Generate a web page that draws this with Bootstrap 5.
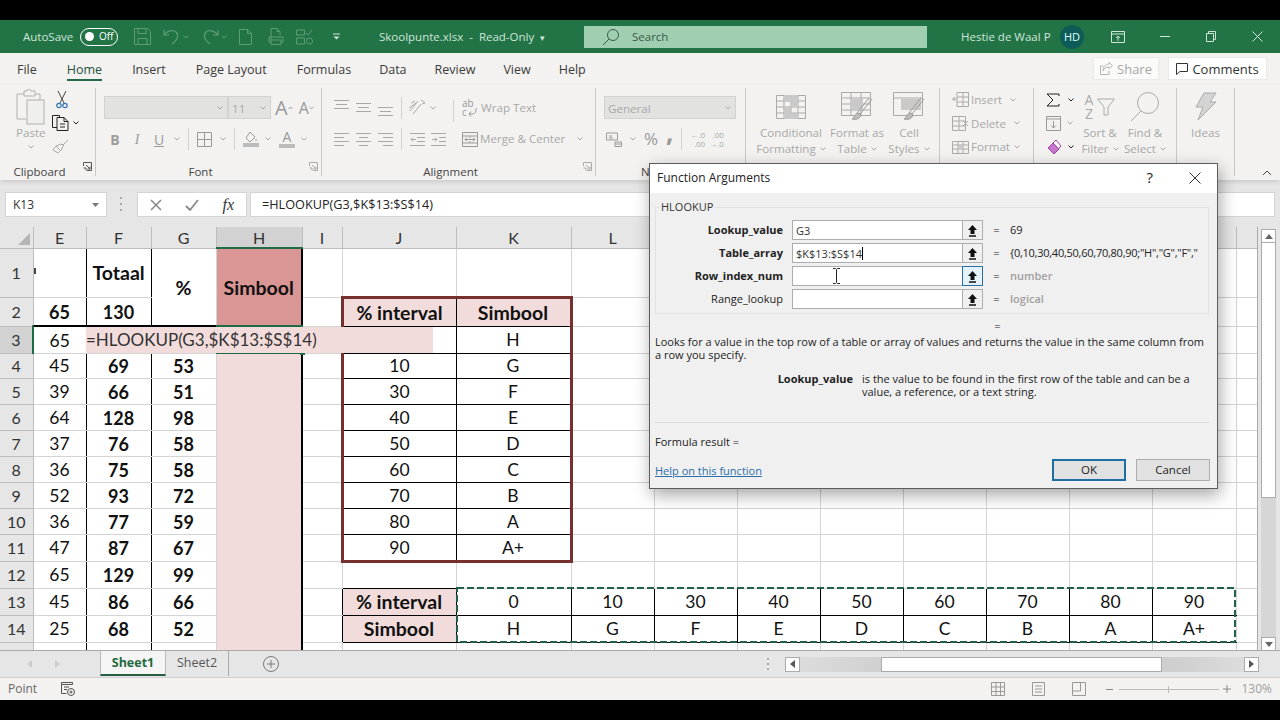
<!DOCTYPE html>
<html lang="en">
<head>
<meta charset="UTF-8">
<title>Skoolpunte.xlsx - Read-Only</title>
<link rel="stylesheet" href="https://cdn.jsdelivr.net/npm/bootstrap@5.3.0/dist/css/bootstrap.min.css">
<style>
html, body { margin: 0; width: 1280px; height: 720px; overflow: hidden; background: #000; }
body { font-family: "Open Sans", "Noto Sans", sans-serif; font-size: 12px; color: #444; }
.screen { position: relative; width: 1280px; height: 720px; padding: 20px 0; background: #000; }
.app { height: 680px; background: #e6e6e6; }
svg { display: block; flex: none; fill: none; }
.ms-2p { margin-left: 2px; } .ms-6p { margin-left: 6px; } .ms-7p { margin-left: 7px; } .ms-10p { margin-left: 10px; } .ms-12p { margin-left: 12px; }
.ms-20p { margin-left: 20px; } .ms-23p { margin-left: 23px; } .ms-27p { margin-left: 27px; } .ms-34p { margin-left: 34px; } .ms-35p { margin-left: 35px; } .ms-36p { margin-left: 36px; }

/* title bar */
.titlebar { height: 33px; background: #227447; color: #cfe5d8; padding-left: 23px; font-size: 11.5px; }
.titlebar > * { flex: none; }
.titlebar .t-auto { width: 57px; }
.toggle { width: 38px; height: 18px; border: 1.5px solid #fff; border-radius: 9px; color: #fff; font-size: 10px; line-height: 15px; padding-left: 18px; position: relative; }
.toggle::before { content: ""; position: absolute; left: 4px; top: 3px; width: 9px; height: 9px; border-radius: 50%; background: #fff; }
.t-title { width: 205px; margin-left: 39px; white-space: nowrap; }
.t-title small { font-size: 9px; }
.searchbox { width: 343px; height: 22px; background: #9fcfb0; color: #3d5a4a; margin-right: 34px; padding-left: 18px; }
.t-user { width: 99px; white-space: nowrap; }
.avatar { width: 24px; height: 24px; border-radius: 50%; background: #0e5c57; color: #dff; font-size: 11px; line-height: 24px; text-align: center; }

/* tabs */
.tabs { height: 32px; background: #f3f2f0; padding-left: 17px; font-size: 12.5px; color: #3b3b3b; }
.tabs .tab { margin-right: 30px; padding-top: 5px; line-height: 24px; height: 28px; white-space: nowrap; }
.tabs .tab.tight { margin-right: 28px; }
.tabs .tab.active { border-bottom: 2px solid #24694a; color: #24533c; }
.btn-share { width: 66px; height: 23px; background: #fbfbfa; border: 1px solid #e9e9e7; border-radius: 0; font-size: 13px; line-height: 20px; padding: 0; color: #a6a6a6; justify-content: center; }
.btn-comments { width: 99px; color: #333; background: #fff; margin: 0 13px 0 9px; }

/* ribbon */
.ribbon { height: 95px; background: #f3f2f0; padding-top: 3px; color: #a8a8a8; box-shadow: 0 2px 4px rgba(0,0,0,.12); position: relative; font-size: 11.6px; }
.rg { position: relative; height: 88px; border-right: 1px solid #c9c9c7; flex: none; }
.rg-body { height: 76px; }
.rg-label { height: 16px; line-height: 16px; margin-bottom: -4px; color: #444; text-align: center; white-space: nowrap; font-size: 11.5px; }
.rg-label.cut { width: 53px; padding-left: 45px; overflow: hidden; text-align: left; }
.launcher { position: absolute; right: 3px; bottom: 5px; }
.g-clip { width: 96px; } .g-font { width: 226px; } .g-align { width: 274px; } .g-num { width: 150px; }
.g-styles { width: 194px; } .g-cells { width: 94px; } .g-edit { width: 143px; } .g-ideas { width: 58px; }
.big { display: flex; flex-direction: column; align-items: center; line-height: 16px; white-space: nowrap; flex: none; }
.big-ico { height: 37px; display: flex; align-items: center; }
.stack { flex: none; }
.stack > div { height: 23.5px; display: flex; align-items: center; white-space: nowrap; }
.two { padding-top: 8px; }
.row-a { height: 23px; display: flex; align-items: center; white-space: nowrap; }
.row-b { height: 26px; margin-top: 7px; display: flex; align-items: center; white-space: nowrap; }
.combo { height: 23px; background: #e2e2e0; border: 1px solid #d2d2d0; display: flex; align-items: center; justify-content: flex-end; padding-right: 4px; position: relative; flex: none; }
.combo span { position: absolute; left: 3px; top: 3px; }
.c-name { width: 124px; } .c-size { width: 43px; } .c-gen { width: 132px; }
.vsep { width: 1px; height: 22px; background: #d0d0ce; flex: none; }
.hsep-b { font-family: "Liberation Serif", serif; }
.fbtn { width: 22px; text-align: center; font-size: 14px; color: #9c9c9c; }
.glyph-a { font-size: 20px; line-height: 20px; color: #999; }
.glyph-a2 { font-size: 16px; line-height: 20px; color: #999; }
.al-col { width: 123px; flex: none; }
.wrap-ico { position: relative; width: 15px; height: 18px; font-size: 10px; line-height: 9px; color: #999; flex: none; }
.wrap-ico svg { position: absolute; right: 0; bottom: 0; }
.color-ico { width: 16px; display: flex; flex-direction: column; align-items: center; font-size: 14px; line-height: 13px; color: #999; }
.color-ico i { display: block; width: 16px; height: 4px; margin-top: 1px; background: #bcbcbc; }
.pct { font-size: 17px; line-height: 20px; color: #999; }
.comma { font-size: 26px; line-height: 20px; font-weight: 700; color: #999; transform: translateY(-7px); }
.dec { font-size: 8px; line-height: 9px; color: #a8a8a8; text-align: right; flex: none; }
.az { display: flex; flex-direction: column; align-items: center; font-size: 14px; line-height: 14px; color: #aaa; }
.col-a { width: 70px; } .col-b { width: 62px; } .col-c { width: 42px; }
.col-sort { width: 44px; } .col-find { width: 46px; } .st-edit { width: 32px; }

/* formula bar */
.fbar { height: 47px; padding: 12px 5px 0 5px; background: #e6e6e6; }
.fbox { height: 25px; background: #fff; border: 1px solid #d4d4d4; color: #333; }
.f-name { width: 102px; padding: 0 7px; }
.f-fx { width: 110px; margin-left: 30px; padding: 0 12px; position: relative; }
.f-input { width: 1025px; margin-left: 3px; padding: 0 11px; }
.f-input span { font-size: 12.7px; color: #222; }
.f-dots { position: absolute; left: 120px; top: 197px; }

/* sheet */
.sheet-row { height: 423px; }
.sheet-wrap { position: relative; width: 1258px; height: 423px; overflow: hidden; background: #fff; border-right: 1px solid #aaa; flex: none; }
table.sheet { table-layout: fixed; width: 1258px; font-family: Lato, "Liberation Sans", sans-serif; font-size: 17.5px; color: #111; }
table.sheet th, table.sheet td { padding: 1px 0 0; text-align: center; vertical-align: middle; border-style: solid; border-width: 0 1px 1px 0; border-color: #d4d4d4; line-height: 1; overflow: hidden; white-space: nowrap; font-weight: 400; }
table.sheet thead th { background: #e6e6e6; border-color: #bdbdbd; color: #333; font-family: Lato, sans-serif; font-size: 16px; height: 21px; }
table.sheet tbody th { background: #e6e6e6; border-color: #bdbdbd; color: #333; font-size: 16px; }
table.sheet thead th.on { background: #d2d2d2; border-bottom: 2px solid #1f6b45; }
table.sheet tbody th.on { background: #d2d2d2; border-right: 2px solid #1f6b45; }
.corner { position: relative; }
.corner::after { content: ""; position: absolute; right: 3px; bottom: 3px; border-style: solid; border-width: 0 0 12px 12px; border-color: transparent transparent #b5b5b5 transparent; }
.r1 { height: 49px; } .r2 { height: 29px; } .r3, .r11, .r12, .r13, .r14 { height: 27px; } .r4 { height: 25px; } .r5, .r6, .r7, .r8, .r9, .r10 { height: 26px; } .r15 { height: 8px; }
table.sheet td.bk { border-right-color: #000; }
table.sheet td.bb { border-bottom-color: #000; }
table.sheet td.bt { border-top: 2px solid #000; }
table.sheet td.fw { font-weight: 700; font-size: 18px; }
table.sheet td.big-t { font-size: 19.5px; }
table.sheet td.dark { background: #da9694; border-right: 2px solid #000; border-bottom-color: #da9694; font-weight: 700; font-size: 19.5px; }
table.sheet td.pink { background: #f2dcdb; border-right: 2px solid #000; border-bottom-color: #f2dcdb; }
table.sheet td.head { background: #f2dcdb; font-weight: 700; font-size: 19.5px; }
table.sheet td.ol { border-left: 3px solid #76302e; }
table.sheet td.or { border-right: 3px solid #76302e; }
table.sheet td.ot { border-top: 3px solid #76302e; }
table.sheet td.ob { border-bottom: 3px solid #76302e; }
.clip-e { display: block; width: 2px; height: 6px; margin-top: -4px; background: #444; }
.edit { position: absolute; left: 86px; top: 100px; width: 347px; height: 26px; background: #f2dcdb; font-family: Lato, sans-serif; font-size: 17px; line-height: 26px; color: #333; white-space: nowrap; }
.sel { position: absolute; left: 216px; top: 98px; width: 87px; height: 29px; border-top: 2px solid #1f6b45; border-bottom: 2px solid #1f6b45; }
.sel::after { content: ""; position: absolute; right: -2px; bottom: -3px; width: 5px; height: 5px; background: #1f6b45; }
.sel-l { position: absolute; left: 32px; top: 99px; width: 2px; height: 27px; background: #1f6b45; }
.ants { position: absolute; left: 456px; top: 360px; }

/* scrollbars */
.vscroll { width: 21px; padding: 2px 3px 0 3px; }
.sb-btn { background: #fff; border: 1px solid #ababab; }
.vscroll .sb-btn { height: 14px; }
.v-thumb { height: 255px; background: #fff; border: 1px solid #ababab; border-top: 0; }
.v-track { height: 139px; background: #d6d6d6; }

/* sheet tabs */
.sheetbar { height: 28px; background: #e6e6e6; border-top: 1px solid #aaa; border-bottom: 1px solid #d0d0d0; padding-left: 27px; }
.s-tab { height: 25px; line-height: 24px; font-size: 12.5px; text-align: center; align-self: flex-start; }
.s-tab.active { width: 66px; margin-left: 40px; background: #f5f5f5; color: #24693f; font-weight: 700; border-left: 1px solid #bbb; border-right: 1px solid #bbb; border-bottom: 2px solid #24603f; }
.s-tab.other { width: 63px; color: #555; border-right: 1px solid #aaa; }
.h-track { width: 444px; height: 15px; background: linear-gradient(90deg, #dcdcdc, #cfcfcf 20%, #cfcfcf 85%, #dcdcdc); position: relative; }
.h-thumb { position: absolute; left: 81px; top: 0; width: 281px; height: 15px; background: #fff; border: 1px solid #ababab; }
.h-btn { width: 15px; height: 15px; background: #fff; border: 1px solid #ababab; display: flex; align-items: center; justify-content: center; }
.h-end { margin-right: 21px; }

/* status bar */
.statusbar { height: 22px; background: #f3f2f0; padding-left: 8px; color: #666; font-size: 12px; }
.zoomline { width: 100px; height: 1px; background: #bbb; position: relative; }
.zoomline::after { content: ""; position: absolute; left: 49px; top: -3px; width: 1px; height: 7px; background: #bbb; }

/* dialog */
.dlg { position: absolute; left: 649px; top: 163px; width: 569px; height: 326px; background: #f0f0f0; border: 1px solid #5c5c5c; box-shadow: 2px 6px 16px rgba(0,0,0,.35); color: #222; font-size: 11px; }
.dlg-head { height: 29px; background: #fff; padding: 0 0 2px 7px; font-size: 12px; }
.dlg fieldset { margin: 7px 8px 0 5px; height: 114px; border: 1px solid #e2e2e2; padding: 0; }
.dlg legend { float: none; width: auto; margin: 0 0 0 4px; padding: 0 1px; font-size: 11px; line-height: 14px; color: #333; }
.fa-row { height: 20px; margin-bottom: 3px; display: flex; align-items: center; }
.fa-rows { padding-top: 6px; }
.fa-label { width: 127px; text-align: right; white-space: nowrap; }
.fa-input { width: 191px; margin-left: 9px; flex-wrap: nowrap; }
.fa-input .form-control { height: 20px; min-height: 0; padding: 0 3px; font-size: 11px; line-height: 19px; border: 1px solid #adadad; border-radius: 0; background: #fff; color: #333; box-shadow: none; }
.fa-input .btn { width: 21px; height: 20px; padding: 0; border: 1px solid #adadad; border-radius: 0; background: #f0f0f0; display: flex; align-items: center; justify-content: center; }
.fa-input .btn.focus { border-color: #2a6ea8; background: #e5f1fb; }
.caret-bar { display: inline-block; width: 1px; height: 13px; background: #000; vertical-align: -2px; }
.fa-eq { width: 27px; text-align: center; }
.fa-val { white-space: nowrap; }
.fa-val.arr { letter-spacing: -.25px; }
.muted { color: #a0a0a0; }
.eq-only { height: 14px; line-height: 14px; margin: 5px 0 0 334px; width: 27px; text-align: center; }
.dlg p { margin: 0; line-height: 13px; white-space: nowrap; }
.dlg p.desc { margin: 2px 0 0 5px; }
.arg { margin: 11px 0 0 5px; }
.dlg p.arg-l { width: 198px; text-align: right; font-weight: 700; }
.dlg p.arg-r { margin-left: 9px; }
.dlg hr { margin: 24px 8px 0 5px; border: 0; border-top: 1px solid #dcdcdc; opacity: 1; }
.f-res { margin: 12px 0 0 5px; line-height: 13px; }
.dlg-foot { margin: 11px 7px 0 5px; }
.dlg-foot a { color: #2a6ea8; margin-bottom: 2px; }
.dlg-foot .btn { width: 74px; height: 22px; padding: 0; font-size: 11.5px; line-height: 18px; border-radius: 0; background: #e1e1e1; border: 1px solid #adadad; color: #222; }
.dlg-foot .btn-ok { border: 2px solid #1c6ea4; margin-right: 10px; }
.ibeam { position: absolute; left: 182px; top: 104px; }
.dlg-help { font-size: 15px; margin-right: 36px; }
</style>
</head>
<body>

<svg width="0" height="0" class="position-absolute">
  <symbol id="chev" viewBox="0 0 6 4"><path d="M.5.5 3 3 5.500.5" stroke="currentColor" stroke-width="1"/></symbol>
  <symbol id="launch" viewBox="0 0 9 9"><path d="M.5 4V.5h8v8H4M3 3l4 4M7 4.500V7H4.500M.5 6h2.500v2.500" stroke="currentColor"/></symbol>
  <symbol id="up" viewBox="0 0 11 13"><path d="M5.500 1 10 6H7.500v4h-4V6H1z" fill="#111"/><path d="M2 12h7" stroke="#111" stroke-width="1.500"/></symbol>
</svg>

<div class="screen">
<div class="app d-flex flex-column">

  <!-- title bar -->
  <div class="titlebar d-flex align-items-center">
    <span class="t-auto">AutoSave</span>
    <span class="toggle">Off</span>
    <svg class="ms-3" width="17" height="17" viewBox="0 0 17 17" stroke="#5d9c7a"><path d="M.5.5h13l3 3v13H.5zM4 .5v5h8v-5M4 16.500v-6h9v6"/></svg>
    <svg class="ms-12p" width="18" height="17" viewBox="0 0 18 17" stroke="#5d9c7a"><path d="M1 2v5h5M1 7c3-4 9-6 12-3s2 8-4 12" stroke-width="1.200"/></svg>
    <svg class="ms-2p" width="6" height="4" color="#5d9c7a"><use href="#chev"/></svg>
    <svg class="ms-12p" width="18" height="17" viewBox="0 0 18 17" stroke="#5d9c7a"><path d="M17 2v5h-5M17 7C14 3 8 1 5 4s-2 8 4 12" stroke-width="1.200"/></svg>
    <svg class="ms-2p" width="6" height="4" color="#5d9c7a"><use href="#chev"/></svg>
    <svg class="ms-12p" width="13" height="16" viewBox="0 0 13 16" stroke="#5d9c7a"><path d="M.5.5h8l4 4v11H.500zM8.500.5v4h4"/></svg>
    <svg class="ms-3" width="16" height="17" viewBox="0 0 16 17" stroke="#5d9c7a"><path d="M3 12V.5h6l3 3V7M9 .5v3h3M1 9h14v5h-2M3 14H1V9M3 12h10v4.500H3z"/></svg>
    <svg class="ms-12p" width="17" height="16" viewBox="0 0 17 16" stroke="#5d9c7a"><path d="M.5 1h8v5h-8zM.5 9h8v6h-8zM10 4l2 2 4-5M14 15a3 3 0 1 0-1-6 3 3 0 0 0 1 6z"/></svg>
    <svg class="ms-20p" width="7" height="7" viewBox="0 0 7 7" stroke="#cfe5d8"><path d="M0 1h7"/><path d="M.5 3.500h6L3.500 6.500z" fill="#cfe5d8" stroke="none"/></svg>
    <span class="t-title">Skoolpunte.xlsx &nbsp;-&nbsp; Read-Only &nbsp;<small>▾</small></span>
    <div class="searchbox d-flex align-items-center">
      <svg width="18" height="18" viewBox="0 0 18 18" stroke="#3d5a4a"><circle cx="11" cy="7" r="5.500"/><path d="M7 11l-6 6"/></svg>
      <span class="ms-12p">Search</span>
    </div>
    <span class="t-user">Hestie de Waal P</span>
    <span class="avatar">HD</span>
    <svg class="ms-27p" width="14" height="12" viewBox="0 0 14 12" stroke="#cfe5d8"><path d="M.5.5h13v11H.500zM.5 3h13M7 10V5M5 7l2-2 2 2"/></svg>
    <svg class="ms-35p" width="10" height="1" viewBox="0 0 10 1" stroke="#cfe5d8"><path d="M0 .5h10"/></svg>
    <svg class="ms-36p" width="10" height="11" viewBox="0 0 10 11" stroke="#cfe5d8"><path d="M.5 2.500h7v8h-7zM2.500 2.500v-2h7v8h-2"/></svg>
    <svg class="ms-36p" width="11" height="11" viewBox="0 0 11 11" stroke="#cfe5d8"><path d="M.5.5l10 10M10.500.5l-10 10"/></svg>
  </div>

  <!-- ribbon tabs -->
  <div class="tabs d-flex">
    <span class="tab">File</span>
    <span class="tab active">Home</span>
    <span class="tab">Insert</span>
    <span class="tab">Page Layout</span>
    <span class="tab tight">Formulas</span>
    <span class="tab tight">Data</span>
    <span class="tab tight">Review</span>
    <span class="tab tight">View</span>
    <span class="tab">Help</span>
    <div class="ms-auto d-flex pt-1">
      <button class="btn btn-share d-flex align-items-center" type="button">
        <svg class="me-1" width="13" height="13" viewBox="0 0 13 13" stroke="#b5b5b5"><path d="M9 .5l3.500 3L9 6.500V5C6 5 4 6 3 9 3 5 5 2.500 9 2zM9 8.500v4H.5V4h3"/></svg>Share</button>
      <button class="btn btn-share btn-comments d-flex align-items-center" type="button">
        <svg class="me-1" width="12" height="12" viewBox="0 0 12 12" stroke="#333"><path d="M.5.5h11v8H4l-3.500 3z"/></svg>Comments</button>
    </div>
  </div>

  <!-- ribbon -->
  <div class="ribbon d-flex">

    <div class="rg g-clip">
      <div class="rg-body d-flex">
        <div class="big ms-3">
          <div class="big-ico">
            <svg width="29" height="36" viewBox="0 0 29 36" stroke="#b0b0b0"><path d="M8 5H1v25h9M19 5h5v6M8 5V2h3a2 2 0 0 1 4 0h4v5H8z"/><rect x="11" y="11" width="17" height="24" fill="#efefed"/></svg>
          </div>
          <span>Paste</span>
          <svg class="mt-1" width="6" height="4"><use href="#chev"/></svg>
        </div>
        <div class="stack ms-6p">
          <div><svg width="12" height="18" viewBox="0 0 12 18" class="ms-1"><path d="M2 0l6 12M10 0L4 12" stroke="#444"/><circle cx="3" cy="14.500" r="2.200" stroke="#2f75b5" stroke-width="1.200"/><circle cx="9" cy="14.500" r="2.200" stroke="#2f75b5" stroke-width="1.200"/></svg></div>
          <div><svg width="17" height="16" viewBox="0 0 17 16" stroke="#222"><path d="M5 12.500H.5V.5h7v2M5 2.500h7l4 4v9H5zM12 2.500v4h4M8 9h5M8 12h5"/></svg><svg class="ms-1" width="6" height="4" color="#222"><use href="#chev"/></svg></div>
          <div><svg width="17" height="15" viewBox="0 0 17 15" stroke="#aaa"><path d="M16 1l-5 5-2-1-5 2-3 4 5 3 4-4 1-3M10 5l2 2M4 7l4 4"/></svg></div>
        </div>
      </div>
      <div class="rg-label pe-3">Clipboard</div>
      <svg class="launcher" width="9" height="9" color="#555"><use href="#launch"/></svg>
    </div>

    <div class="rg g-font">
      <div class="rg-body two ps-2">
        <div class="row-a">
          <div class="combo c-name"><svg width="6" height="4"><use href="#chev"/></svg></div>
          <div class="combo c-size"><span>11</span><svg width="6" height="4"><use href="#chev"/></svg></div>
          <span class="glyph-a ms-1">A</span><svg width="5" height="4" color="#999"><path d="M.5 3 2.500 1l2 2" stroke="currentColor"/></svg>
          <span class="glyph-a2 ms-6p">A</span><svg width="5" height="4" color="#999"><use href="#chev"/></svg>
        </div>
        <div class="row-b">
          <span class="fbtn fw-bold">B</span>
          <span class="fbtn fst-italic hsep-b">I</span>
          <span class="fbtn text-decoration-underline">U</span>
          <svg class="ms-1" width="6" height="4"><use href="#chev"/></svg>
          <span class="vsep ms-2"></span>
          <svg class="ms-2" width="15" height="15" viewBox="0 0 15 15" stroke="#999"><path d="M.5.5h14v14H.5zM7.500.5v14M.5 7.500h14"/></svg>
          <svg class="ms-2" width="6" height="4"><use href="#chev"/></svg>
          <span class="vsep ms-2"></span>
          <svg class="ms-2" width="16" height="16" viewBox="0 0 16 16" stroke="#999"><path d="M7 1l5 5-5 5-4-4zM13 8v2"/><rect y="12" width="16" height="4" fill="#bcbcbc" stroke="none"/></svg>
          <svg class="ms-6p" width="6" height="4"><use href="#chev"/></svg>
          <span class="color-ico ms-2">A<i></i></span>
          <svg class="ms-6p" width="6" height="4"><use href="#chev"/></svg>
        </div>
      </div>
      <div class="rg-label pe-3">Font</div>
      <svg class="launcher" width="9" height="9" color="#aaa"><use href="#launch"/></svg>
    </div>

    <div class="rg g-align">
      <div class="rg-body two ps-2 d-flex">
        <div class="d-flex flex-column al-col">
          <div class="row-a">
            <svg class="ms-1" width="15" height="23" viewBox="0 0 15 23" stroke="#a8a8a8"><path d="M0 4.500h15M2 8.500h11M0 12.500h15"/></svg>
            <svg class="ms-7p" width="15" height="23" viewBox="0 0 15 23" stroke="#a8a8a8"><path d="M0 7.500h15M2 11.500h11M0 15.500h15"/></svg>
            <svg class="ms-7p" width="15" height="23" viewBox="0 0 15 23" stroke="#a8a8a8"><path d="M0 11.500h15M2 15.500h11M0 19.500h15"/></svg>
            <span class="vsep ms-2"></span>
            <svg class="ms-6p" width="18" height="17" viewBox="0 0 18 17" stroke="#a8a8a8"><path d="M2 12 10 2M5 15l8-10M13 1l4 3-3 1M3 4l4-2M1 9l7-5"/></svg>
            <svg class="ms-1" width="6" height="4"><use href="#chev"/></svg>
          </div>
          <div class="row-b">
            <svg class="ms-1" width="15" height="15" viewBox="0 0 15 15" stroke="#a8a8a8"><path d="M0 1.500h15M0 5.500h10M0 9.500h15M0 13.500h10"/></svg>
            <svg class="ms-7p" width="15" height="15" viewBox="0 0 15 15" stroke="#a8a8a8"><path d="M0 1.500h15M3 5.500h9M0 9.500h15M3 13.500h9"/></svg>
            <svg class="ms-7p" width="15" height="15" viewBox="0 0 15 15" stroke="#a8a8a8"><path d="M0 1.500h15M5 5.500h10M0 9.500h15M5 13.500h10"/></svg>
            <span class="vsep ms-2"></span>
            <svg class="ms-2" width="15" height="15" viewBox="0 0 15 15" stroke="#a8a8a8"><path d="M0 1.500h15M7 5.500h8M7 9.500h8M0 13.500h15M6 7.500H1l2-2M1 7.500l2 2"/></svg>
            <svg class="ms-6p" width="15" height="15" viewBox="0 0 15 15" stroke="#a8a8a8"><path d="M0 1.500h15M8 5.500h7M8 9.500h7M0 13.500h15M1 7.500h5L4 5.500M6 7.500l-2 2"/></svg>
          </div>
        </div>
        <span class="vsep mt-1"></span>
        <div class="d-flex flex-column">
          <div class="row-a ms-2">
            <span class="wrap-ico">ab<br>c<svg width="9" height="9" viewBox="0 0 9 9" stroke="#999"><path d="M8 0v3c0 2-2 3-4 3H1M3 3.500 1 6l2 2.500"/></svg></span>
            <span class="ms-1">Wrap Text</span>
          </div>
          <div class="row-b ms-2">
            <svg width="16" height="15" viewBox="0 0 16 15" stroke="#999"><path d="M.5.5h15v14H.5zM.5 4h15M.5 11h15M8 4v2M8 9v2M3 7.500h10M5 5.500l-2 2 2 2M11 5.500l2 2-2 2"/></svg>
            <span class="ms-2p">Merge &amp; Center</span>
            <svg class="ms-12p" width="6" height="4"><use href="#chev"/></svg>
          </div>
        </div>
      </div>
      <div class="rg-label pe-3">Alignment</div>
      <svg class="launcher" width="9" height="9" color="#aaa"><use href="#launch"/></svg>
    </div>

    <div class="rg g-num">
      <div class="rg-body two ps-2">
        <div class="row-a"><div class="combo c-gen"><span>General</span><svg width="6" height="4"><use href="#chev"/></svg></div></div>
        <div class="row-b">
          <svg class="ms-2p" width="16" height="15" viewBox="0 0 16 15" stroke="#999"><path d="M.5 1h11v7h-11zM9 10h6.500v4.500H9zM9 12h6.500M3 4h3M3 6h4"/></svg>
          <svg class="ms-2" width="6" height="4"><use href="#chev"/></svg>
          <span class="ms-2 pct">%</span>
          <span class="ms-2 comma">,</span>
          <span class="vsep ms-2"></span>
          <span class="dec ms-2">←.0<br>.00</span>
          <span class="dec ms-1">.00<br>→.0</span>
        </div>
      </div>
      <div class="rg-label cut">Number</div>
    </div>

    <div class="rg g-styles">
      <div class="rg-body d-flex">
        <div class="big col-a ms-10p">
          <div class="big-ico"><svg width="30" height="24" viewBox="0 0 30 24" stroke="#aaa"><path d="M.5.5h29v23H.5zM.5 6h29M.5 12h29M.5 18h29M8 .5v23M15 .5v23M22 .5v23"/><path d="M8 0h14v6H8zM15 6h7v6h-7zM8 12h7v6H8zM8 18h14v6H8z" fill="#c9c9c9" stroke="none"/></svg></div>
          <span>Conditional</span>
          <span class="d-flex align-items-center">Formatting<svg class="ms-1" width="6" height="4"><use href="#chev"/></svg></span>
        </div>
        <div class="big col-b">
          <div class="big-ico"><svg width="32" height="30" viewBox="0 0 32 30" stroke="#aaa"><path d="M.5.5h29v23H.5zM.5 6h29M.5 12h29M.5 18h29M10 .5v23M20 .5v23"/><path d="M10 7h12v11H10z" fill="#c9c9c9" stroke="none"/><path d="M31 7 19 22M28 6 16 21" stroke="#999"/><path d="M18 21c-4 0-4 4-7 6 4 1 8 0 9-4z" fill="#bbb" stroke="#999"/></svg></div>
          <span>Format as</span>
          <span class="d-flex align-items-center">Table<svg class="ms-1" width="6" height="4"><use href="#chev"/></svg></span>
        </div>
        <div class="big col-c">
          <div class="big-ico"><svg width="32" height="30" viewBox="0 0 32 30" stroke="#aaa"><path d="M.5.5h29v23H.5zM.5 6h29"/><path d="M8 7h20v11H8z" fill="#c9c9c9" stroke="none"/><path d="M31 7 19 22M28 6 16 21" stroke="#999"/><path d="M18 21c-4 0-4 4-7 6 4 1 8 0 9-4z" fill="#bbb" stroke="#999"/></svg></div>
          <span>Cell</span>
          <span class="d-flex align-items-center">Styles<svg class="ms-1" width="6" height="4"><use href="#chev"/></svg></span>
        </div>
      </div>
      <div class="rg-label"></div>
    </div>

    <div class="rg g-cells">
      <div class="rg-body stack ps-2">
        <div class="ms-1"><svg width="17" height="15" viewBox="0 0 17 15" stroke="#aaa"><path d="M5 .5h11.500v14H5zM5 5h11.500M5 10h11.500M11 .5v14M5 7H.5M3 5 .5 7 3 9"/></svg><span class="ms-2p">Insert</span><svg class="ms-2" width="6" height="4"><use href="#chev"/></svg></div>
        <div class="ms-1"><svg width="17" height="15" viewBox="0 0 17 15" stroke="#aaa"><path d="M.5.5h13v14H.5zM.5 5h13M.5 10h13M7 .5v14M11 5l5 5M16 5l-5 5"/></svg><span class="ms-2p">Delete</span><svg class="ms-2" width="6" height="4"><use href="#chev"/></svg></div>
        <div class="ms-1"><svg width="17" height="15" viewBox="0 0 17 15" stroke="#aaa"><path d="M.5 2.500h16v12H.5zM.5 6h16M.5 10h16M6 2.500v12M11 2.500v12"/><path d="M6 6h5v4H6z" fill="#c9c9c9" stroke="none"/></svg><span class="ms-2p">Format</span><svg class="ms-1" width="6" height="4"><use href="#chev"/></svg></div>
      </div>
      <div class="rg-label"></div>
    </div>

    <div class="rg g-edit">
      <div class="rg-body d-flex ps-2">
        <div class="stack st-edit ms-1">
          <div><svg width="14" height="14" viewBox="0 0 14 14" stroke="#222"><path d="M13 3V1H1l6 6-6 6h12v-2"/></svg><svg class="ms-2" width="6" height="4" color="#222"><use href="#chev"/></svg></div>
          <div><svg width="15" height="15" viewBox="0 0 15 15" stroke="#999"><path d="M.5.5h14v14H.5zM.5 3h14M7.500 5v7M5 9.500l2.500 2.500L10 9.500"/></svg><svg class="ms-6p" width="6" height="4"><use href="#chev"/></svg></div>
          <div><svg width="16" height="16" viewBox="0 0 16 16"><path d="M10 1l5 6-7 8-6-6z" fill="#fff" stroke="#a33ea8"/><path d="M2 9l5-5 6 6-5 5z" fill="#c878cc" stroke="#a33ea8"/></svg><svg class="ms-6p" width="6" height="4" color="#222"><use href="#chev"/></svg></div>
        </div>
        <div class="big col-sort">
          <div class="big-ico"><span class="az"><span>A</span><span>Z</span></span><svg class="ms-1" width="18" height="18" viewBox="0 0 18 18" stroke="#aaa"><path d="M.5 1h17l-6.500 8v8H7V9z"/></svg></div>
          <span>Sort &amp;</span>
          <span class="d-flex align-items-center">Filter<svg class="ms-1" width="6" height="4"><use href="#chev"/></svg></span>
        </div>
        <div class="big col-find">
          <div class="big-ico"><svg width="30" height="30" viewBox="0 0 30 30" stroke="#aaa"><circle cx="18" cy="11" r="10.500"/><path d="M11 19 1 29"/></svg></div>
          <span>Find &amp;</span>
          <span class="d-flex align-items-center">Select<svg class="ms-1" width="6" height="4"><use href="#chev"/></svg></span>
        </div>
      </div>
      <div class="rg-label"></div>
    </div>

    <div class="rg g-ideas">
      <div class="rg-body big">
        <div class="big-ico"><svg width="22" height="29" viewBox="0 0 22 29" stroke="#aaa"><path d="M9 1h12l-6 9h6L3 28l5-13H1z" fill="#d4d4d4"/></svg></div>
        <span>Ideas</span>
      </div>
      <div class="rg-label"></div>
    </div>

    <svg class="position-absolute bottom-0 end-0 me-2 mb-1" width="10" height="6" viewBox="0 0 10 6" stroke="#444"><path d="M1 5l4-4 4 4"/></svg>
  </div>

  <!-- formula bar -->
  <div class="fbar d-flex">
    <div class="fbox f-name d-flex align-items-center justify-content-between"><span>K13</span><svg width="7" height="4" viewBox="0 0 7 4"><path d="M0 0h7L3.500 4z" fill="#777"/></svg></div>
    <div class="fbox f-fx d-flex align-items-center justify-content-between">
      <svg width="12" height="12" viewBox="0 0 12 12" stroke="#888" stroke-width="1.500"><path d="M1 1l10 10M11 1 1 11"/></svg>
      <svg width="14" height="12" viewBox="0 0 14 12" stroke="#888" stroke-width="1.800"><path d="M1 7l4 4 8-10"/></svg>
      <span class="fst-italic hsep-b fs-6">fx</span>
    </div>
    <div class="fbox f-input d-flex align-items-center"><span>=HLOOKUP(G3,$K$13:$S$14)</span></div>
  </div>
  <svg class="f-dots" width="2" height="14" viewBox="0 0 2 14"><path d="M0 0h2v2H0zM0 6h2v2H0zM0 12h2v2H0z" fill="#aaa"/></svg>

  <!-- sheet -->
  <div class="sheet-row d-flex">
    <div class="sheet-wrap">
      <table class="sheet">
        <colgroup><col width="33"><col width="53"><col width="65"><col width="65"><col width="86"><col width="40"><col width="114"><col width="115"><col width="83"><col width="83"><col width="83"><col width="83"><col width="83"><col width="83"><col width="83"><col width="84"><col width="22"></colgroup>
        <thead><tr><th class="corner"></th><th>E</th><th>F</th><th>G</th><th class="on">H</th><th>I</th><th>J</th><th>K</th><th>L</th><th></th><th></th><th></th><th></th><th></th><th></th><th></th><th></th></tr></thead>
        <tbody>
          <tr class="r1"><th>1</th><td class="bk text-start"><span class="clip-e"></span></td><td class="bk fw big-t">Totaal</td><td rowspan="2" class="fw big-t">%</td><td rowspan="2" class="dark">Simbool</td><td></td><td></td><td></td><td></td><td></td><td></td><td></td><td></td><td></td><td></td><td></td><td></td></tr>
          <tr class="r2"><th>2</th><td class="bk fw">65</td><td class="bk fw">130</td><td></td><td class="head ol ot bk bb">% interval</td><td class="head or ot bb">Simbool</td><td></td><td></td><td></td><td></td><td></td><td></td><td></td><td></td><td></td></tr>
          <tr class="r3"><th class="on">3</th><td class="bk bt">65</td><td class="bk bt"></td><td class="bt"></td><td class="pink"></td><td></td><td class="ol bk bb"></td><td class="or bb">H</td><td></td><td></td><td></td><td></td><td></td><td></td><td></td><td></td><td></td></tr>
          <tr class="r4"><th>4</th><td class="bk">45</td><td class="bk fw">69</td><td class="fw">53</td><td class="pink"></td><td></td><td class="ol bk bb">10</td><td class="or bb">G</td><td></td><td></td><td></td><td></td><td></td><td></td><td></td><td></td><td></td></tr>
          <tr class="r5"><th>5</th><td class="bk">39</td><td class="bk fw">66</td><td class="fw">51</td><td class="pink"></td><td></td><td class="ol bk bb">30</td><td class="or bb">F</td><td></td><td></td><td></td><td></td><td></td><td></td><td></td><td></td><td></td></tr>
          <tr class="r6"><th>6</th><td class="bk">64</td><td class="bk fw">128</td><td class="fw">98</td><td class="pink"></td><td></td><td class="ol bk bb">40</td><td class="or bb">E</td><td></td><td></td><td></td><td></td><td></td><td></td><td></td><td></td><td></td></tr>
          <tr class="r7"><th>7</th><td class="bk">37</td><td class="bk fw">76</td><td class="fw">58</td><td class="pink"></td><td></td><td class="ol bk bb">50</td><td class="or bb">D</td><td></td><td></td><td></td><td></td><td></td><td></td><td></td><td></td><td></td></tr>
          <tr class="r8"><th>8</th><td class="bk">36</td><td class="bk fw">75</td><td class="fw">58</td><td class="pink"></td><td></td><td class="ol bk bb">60</td><td class="or bb">C</td><td></td><td></td><td></td><td></td><td></td><td></td><td></td><td></td><td></td></tr>
          <tr class="r9"><th>9</th><td class="bk">52</td><td class="bk fw">93</td><td class="fw">72</td><td class="pink"></td><td></td><td class="ol bk bb">70</td><td class="or bb">B</td><td></td><td></td><td></td><td></td><td></td><td></td><td></td><td></td><td></td></tr>
          <tr class="r10"><th>10</th><td class="bk">36</td><td class="bk fw">77</td><td class="fw">59</td><td class="pink"></td><td></td><td class="ol bk bb">80</td><td class="or bb">A</td><td></td><td></td><td></td><td></td><td></td><td></td><td></td><td></td><td></td></tr>
          <tr class="r11"><th>11</th><td class="bk">47</td><td class="bk fw">87</td><td class="fw">67</td><td class="pink"></td><td></td><td class="ol ob bk">90</td><td class="or ob">A+</td><td></td><td></td><td></td><td></td><td></td><td></td><td></td><td></td><td></td></tr>
          <tr class="r12"><th>12</th><td class="bk">65</td><td class="bk fw">129</td><td class="fw">99</td><td class="pink"></td><td></td><td class="bb"></td><td></td><td></td><td></td><td></td><td></td><td></td><td></td><td></td><td></td><td></td></tr>
          <tr class="r13"><th>13</th><td class="bk">45</td><td class="bk fw">86</td><td class="fw">66</td><td class="pink"></td><td class="bk"></td><td class="head bk bb">% interval</td><td class="bk bb">0</td><td class="bk bb">10</td><td class="bk bb">30</td><td class="bk bb">40</td><td class="bk bb">50</td><td class="bk bb">60</td><td class="bk bb">70</td><td class="bk bb">80</td><td class="bb">90</td><td></td></tr>
          <tr class="r14"><th>14</th><td class="bk">25</td><td class="bk fw">68</td><td class="fw">52</td><td class="pink"></td><td class="bk"></td><td class="head bk bb">Simbool</td><td class="bk bb">H</td><td class="bk bb">G</td><td class="bk bb">F</td><td class="bk bb">E</td><td class="bk bb">D</td><td class="bk bb">C</td><td class="bk bb">B</td><td class="bk bb">A</td><td class="bb">A+</td><td></td></tr>
          <tr class="r15"><th></th><td class="bk"></td><td class="bk"></td><td></td><td class="pink"></td><td></td><td></td><td></td><td></td><td></td><td></td><td></td><td></td><td></td><td></td><td></td><td></td></tr>
        </tbody>
      </table>
      <div class="sel-l"></div>
      <div class="sel"></div>
      <div class="edit">=HLOOKUP(G3,$K$13:$S$14)</div>
      <svg class="ants" width="780" height="56" viewBox="0 0 780 56"><rect x="1" y="1" width="778" height="54" stroke="#23604a" stroke-width="2" stroke-dasharray="7 3"/></svg>
    </div>
    <div class="vscroll">
      <div class="sb-btn d-flex align-items-center justify-content-center"><svg width="8" height="5" viewBox="0 0 8 5"><path d="M4 0l4 5H0z" fill="#666"/></svg></div>
      <div class="v-thumb"></div>
      <div class="v-track"></div>
      <div class="sb-btn d-flex align-items-center justify-content-center"><svg width="8" height="5" viewBox="0 0 8 5"><path d="M0 0h8L4 5z" fill="#666"/></svg></div>
    </div>
  </div>

  <!-- sheet tabs -->
  <div class="sheetbar d-flex align-items-center">
    <svg width="5" height="8" viewBox="0 0 5 8"><path d="M5 0v8L0 4z" fill="#ccc"/></svg>
    <svg class="ms-23p" width="5" height="8" viewBox="0 0 5 8"><path d="M0 0v8l5-4z" fill="#ccc"/></svg>
    <div class="s-tab active">Sheet1</div>
    <div class="s-tab other">Sheet2</div>
    <svg class="ms-34p" width="16" height="16" viewBox="0 0 16 16" stroke="#777"><circle cx="8" cy="8" r="7.500"/><path d="M8 4v8M4 8h8"/></svg>
    <svg class="ms-auto me-3" width="2" height="13" viewBox="0 0 2 13"><path d="M0 0h2v2H0zM0 5h2v2H0zM0 10h2v2H0z" fill="#aaa"/></svg>
    <div class="h-btn"><svg width="5" height="8" viewBox="0 0 5 8"><path d="M5 0v8L0 4z" fill="#555"/></svg></div>
    <div class="h-track"><div class="h-thumb"></div></div>
    <div class="h-btn h-end"><svg width="5" height="8" viewBox="0 0 5 8"><path d="M0 0v8l5-4z" fill="#555"/></svg></div>
  </div>

  <!-- status bar -->
  <div class="statusbar d-flex align-items-center">
    <span>Point</span>
    <svg class="ms-4" width="14" height="14" viewBox="0 0 14 14" stroke="#555"><path d="M.5.5h11v2H.5zM.5 2.500v9h5M3 5h5M3 7.500h3"/><circle cx="10" cy="10" r="3.500"/><circle cx="10" cy="10" r="1"/></svg>
    <svg class="ms-auto" width="14" height="14" viewBox="0 0 14 14" stroke="#999"><path d="M.5.5h13v13H.5zM.5 5h13M.5 9.500h13M5 .5v13M9.500.5v13"/></svg>
    <svg class="ms-27p" width="13" height="14" viewBox="0 0 13 14" stroke="#999"><path d="M.5.5h12v13H.5zM3 4h7M3 7h7M3 10h7"/></svg>
    <svg class="ms-27p" width="14" height="14" viewBox="0 0 14 14" stroke="#999"><path d="M.5.5h13v13H.5zM.5 9h8V.5"/></svg>
    <svg class="ms-20p" width="7" height="1" viewBox="0 0 7 1" stroke="#888"><path d="M0 .5h7"/></svg>
    <div class="zoomline ms-6p"></div>
    <svg class="ms-1" width="8" height="8" viewBox="0 0 8 8" stroke="#888"><path d="M0 4h8M4 0v8"/></svg>
    <span class="ms-10p me-2 muted">130%</span>
  </div>
</div>

<!-- function arguments dialog -->
<div class="dlg">
  <div class="dlg-head d-flex align-items-center">
    <span>Function Arguments</span>
    <span class="ms-auto dlg-help">?</span>
    <svg class="me-3" width="12" height="12" viewBox="0 0 12 12" stroke="#333"><path d="M.5.5l11 11M11.500.5l-11 11"/></svg>
  </div>
  <fieldset>
    <legend>HLOOKUP</legend>
    <div class="fa-rows">
      <div class="fa-row">
        <span class="fa-label fw-bold">Lookup_value</span>
        <div class="input-group fa-input"><div class="form-control">G3</div><button class="btn" type="button"><svg width="11" height="13"><use href="#up"/></svg></button></div>
        <span class="fa-eq">=</span><span class="fa-val">69</span>
      </div>
      <div class="fa-row">
        <span class="fa-label fw-bold">Table_array</span>
        <div class="input-group fa-input"><div class="form-control">$K$13:$S$14<span class="caret-bar"></span></div><button class="btn" type="button"><svg width="11" height="13"><use href="#up"/></svg></button></div>
        <span class="fa-eq">=</span><span class="fa-val arr">{0,10,30,40,50,60,70,80,90;"H","G","F","</span>
      </div>
      <div class="fa-row">
        <span class="fa-label fw-bold">Row_index_num</span>
        <div class="input-group fa-input"><div class="form-control"></div><button class="btn focus" type="button"><svg width="11" height="13"><use href="#up"/></svg></button></div>
        <span class="fa-eq">=</span><span class="fa-val muted fw-semibold">number</span>
      </div>
      <div class="fa-row">
        <span class="fa-label">Range_lookup</span>
        <div class="input-group fa-input"><div class="form-control"></div><button class="btn" type="button"><svg width="11" height="13"><use href="#up"/></svg></button></div>
        <span class="fa-eq">=</span><span class="fa-val muted fw-semibold">logical</span>
      </div>
    </div>
  </fieldset>
  <div class="eq-only">=</div>
  <p class="desc">Looks for a value in the top row of a table or array of values and returns the value in the same column from<br>a row you specify.</p>
  <div class="arg d-flex">
    <p class="arg-l">Lookup_value</p>
    <p class="arg-r">is the value to be found in the first row of the table and can be a<br>value, a reference, or a text string.</p>
  </div>
  <hr>
  <div class="f-res">Formula result =</div>
  <div class="dlg-foot d-flex align-items-end">
    <a href="#">Help on this function</a>
    <button class="btn btn-ok ms-auto" type="button">OK</button>
    <button class="btn" type="button">Cancel</button>
  </div>
  <svg class="ibeam" width="9" height="16" viewBox="0 0 9 16" stroke="#222"><path d="M1 .5h2.500l1 1 1-1H8M4.500 1.500v13M1 15.500h2.500l1-1 1 1H8"/></svg>
</div>
</div>

<script src="https://cdn.jsdelivr.net/npm/bootstrap@5.3.0/dist/js/bootstrap.bundle.min.js"></script>
</body>
</html>
